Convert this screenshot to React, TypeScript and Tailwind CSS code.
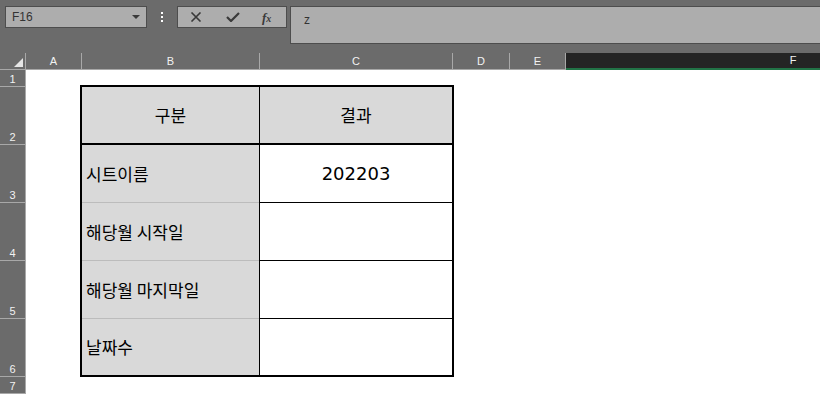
import { Fragment } from "react";

const columns = [
  { id: "A", width: "w-[56px]" },
  { id: "B", width: "w-[178px]" },
  { id: "C", width: "w-[193px]" },
  { id: "D", width: "w-[57px]" },
  { id: "E", width: "w-[56px]" },
];

const rowHeaders = [
  { id: "1", height: "h-[17px]" },
  { id: "2", height: "h-[58px]" },
  { id: "3", height: "h-[58px]" },
  { id: "4", height: "h-[58px]" },
  { id: "5", height: "h-[58px]" },
  { id: "6", height: "h-[58px]" },
  { id: "7", height: "h-[17px]" },
];

const bodyRows = [
  { label: "시트이름", value: "202203" },
  { label: "해당월 시작일", value: "" },
  { label: "해당월 마지막일", value: "" },
  { label: "날짜수", value: "" },
];

const ui = "font-['Liberation_Sans','Noto_Sans_CJK_KR',sans-serif]";
const kr = "font-['Noto_Sans_CJK_KR',sans-serif]";

function Toolbar() {
  return (
    <div className="flex h-[53px] items-start bg-[#6b6b6b] pt-[6px] pl-[5px]">
      <div className="flex h-[22px] w-[142px] items-center justify-between border border-[#4d4d4d] bg-[#adadad] pl-[6px] pr-[6px]">
        <span className={`${ui} text-[12px] text-[#333]`}>F16</span>
        <svg width="8" height="4" viewBox="0 0 8 4">
          <path d="M0 0h8L4 4z" fill="#3a3a3a" />
        </svg>
      </div>
      <div className="flex h-[22px] w-[30px] flex-col items-center justify-center gap-[2px]">
        <span className="h-[2px] w-[2px] bg-white" />
        <span className="h-[2px] w-[2px] bg-white" />
        <span className="h-[2px] w-[2px] bg-white" />
      </div>
      <div className="flex h-[22px] w-[110px] items-center border border-[#4d4d4d] bg-[#adadad]">
        <svg className="ml-[12px]" width="12" height="10" viewBox="0 0 12 10">
          <path d="M1.5 0.5l9 9M10.5 0.5l-9 9" stroke="#3a3a3a" strokeWidth="1.6" />
        </svg>
        <svg className="ml-[24px]" width="14" height="10" viewBox="0 0 14 10">
          <path d="M1 5l4 4 8-8" stroke="#3a3a3a" strokeWidth="2.2" fill="none" />
        </svg>
        <span className="ml-[22px] font-['Liberation_Serif',serif] text-[13px] font-bold italic leading-none text-[#3a3a3a]">
          f<span className="text-[10px]">x</span>
        </span>
      </div>
      <div className="ml-[3px] flex h-[38px] flex-1 items-start border border-r-0 border-[#4d4d4d] bg-[#adadad] pl-[13px] pt-[7px]">
        <span className={`${ui} text-[12px] leading-none text-[#333]`}>z</span>
      </div>
    </div>
  );
}

function ColumnHeaders() {
  return (
    <div className={`${ui} flex h-[17px] bg-[#6b6b6b] text-[11px] text-[#f2f2f2]`}>
      <div className="flex w-[26px] items-end justify-end border-r border-b border-[#a8a8a8] pr-[2px] pb-[2px]">
        <svg width="9" height="9" viewBox="0 0 9 9">
          <path d="M9 0v9H0z" fill="#e6e6e6" />
        </svg>
      </div>
      {columns.map((col) => (
        <div
          key={col.id}
          className={`${col.width} flex items-center justify-center border-r border-b border-[#a8a8a8]`}
        >
          {col.id}
        </div>
      ))}
      <div className="flex flex-1 items-center justify-center border-b-2 border-[#217346] bg-[#242424]">
        <span className="ml-[200px]">F</span>
      </div>
    </div>
  );
}

function Table() {
  return (
    <div className="grid w-[374px] grid-cols-[177px_1px_192px] border-2 border-black">
      <div className={`${kr} flex h-[58px] items-center justify-center border-b-2 border-black bg-[#d9d9d9] text-[17px] text-black`}>
        구분
      </div>
      <div className="h-[58px] border-b-2 border-black bg-black" />
      <div className={`${kr} flex h-[58px] items-center justify-center border-b-2 border-black bg-[#d9d9d9] text-[17px] text-black`}>
        결과
      </div>
      {bodyRows.map((row, i) => {
        const last = i === bodyRows.length - 1;
        return (
          <Fragment key={row.label}>
            <div
              className={`${kr} flex items-center bg-[#d9d9d9] pl-[4px] text-[17px] text-black ${
                last ? "h-[56px]" : "h-[58px] border-b border-[#bcbcbc]"
              }`}
            >
              {row.label}
            </div>
            <div className={`bg-black ${last ? "h-[56px]" : "h-[58px]"}`} />
            <div
              className={`flex items-center justify-center bg-white font-['DejaVu_Sans',sans-serif] text-[18px] text-black ${
                last ? "h-[56px]" : "h-[58px] border-b border-black"
              }`}
            >
              {row.value}
            </div>
          </Fragment>
        );
      })}
    </div>
  );
}

export default function App() {
  return (
    <div className="h-[394px] w-[820px] overflow-hidden bg-white">
      <Toolbar />
      <ColumnHeaders />
      <div className="flex">
        <div className={`${ui} flex w-[26px] flex-col bg-[#6b6b6b] text-[11px] text-[#f2f2f2] border-r border-[#a8a8a8]`}>
          {rowHeaders.map((r) => (
            <div
              key={r.id}
              className={`${r.height} flex items-end justify-center border-b border-[#a8a8a8] pb-[1px] leading-none`}
            >
              {r.id}
            </div>
          ))}
        </div>
        <div className="flex-1 pt-[15px] pl-[54px]">
          <Table />
        </div>
      </div>
    </div>
  );
}
